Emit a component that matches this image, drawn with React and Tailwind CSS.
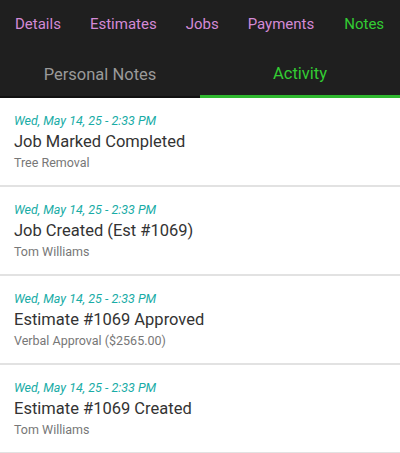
import React from 'react';

const topTabs = ['Details', 'Estimates', 'Jobs', 'Payments', 'Notes'];

const activity = [
  { title: 'Job Marked Completed', sub: 'Tree Removal' },
  { title: 'Job Created (Est #1069)', sub: 'Tom Williams' },
  { title: 'Estimate #1069 Approved', sub: 'Verbal Approval ($2565.00)' },
  { title: 'Estimate #1069 Created', sub: 'Tom Williams' },
];

export default function App() {
  return (
    <div className="w-[400px] h-[453px] overflow-hidden bg-white" style={{ fontFamily: 'Roboto, "Liberation Sans", sans-serif' }}>
      <div className="bg-[#1f1f1f]">
        <div className="flex h-[48px] items-center pl-[15px] pt-[1px]">
          {topTabs.map(t => (
            <span
              key={t}
              className={`text-[15px] ${t === 'Notes' ? 'text-[#33cc33]' : 'text-[#d48ad6]'} ${t === 'Payments' ? 'mr-[30px]' : 'mr-[29px]'}`}
            >
              {t}
            </span>
          ))}
        </div>
        <div className="flex h-[50px] border-b-2 border-[#111]">
          <div className="flex-1 flex items-center justify-center text-[16.5px] text-[#9a9a9a] pt-[7px]">Personal Notes</div>
          <div className="flex-1 flex items-center justify-center text-[16.5px] text-[#33cc33] border-b-[3px] border-[#2fb82f] -mb-[2px] pt-[6px]">Activity</div>
        </div>
      </div>
      <div>
        {activity.map((a, i) => (
          <div key={i} className="h-[89px] border-b-2 border-[#e2e2e2] px-[14px] pt-[14px]">
            <div className="text-[12.5px] italic text-[#19aca6] leading-[18px]">Wed, May 14, 25 - 2:33 PM</div>
            <div className="text-[16.5px] text-[#333] leading-[23px]">{a.title}</div>
            <div className="text-[12.5px] text-[#777] leading-[19px]">{a.sub}</div>
          </div>
        ))}
      </div>
    </div>
  );
}
